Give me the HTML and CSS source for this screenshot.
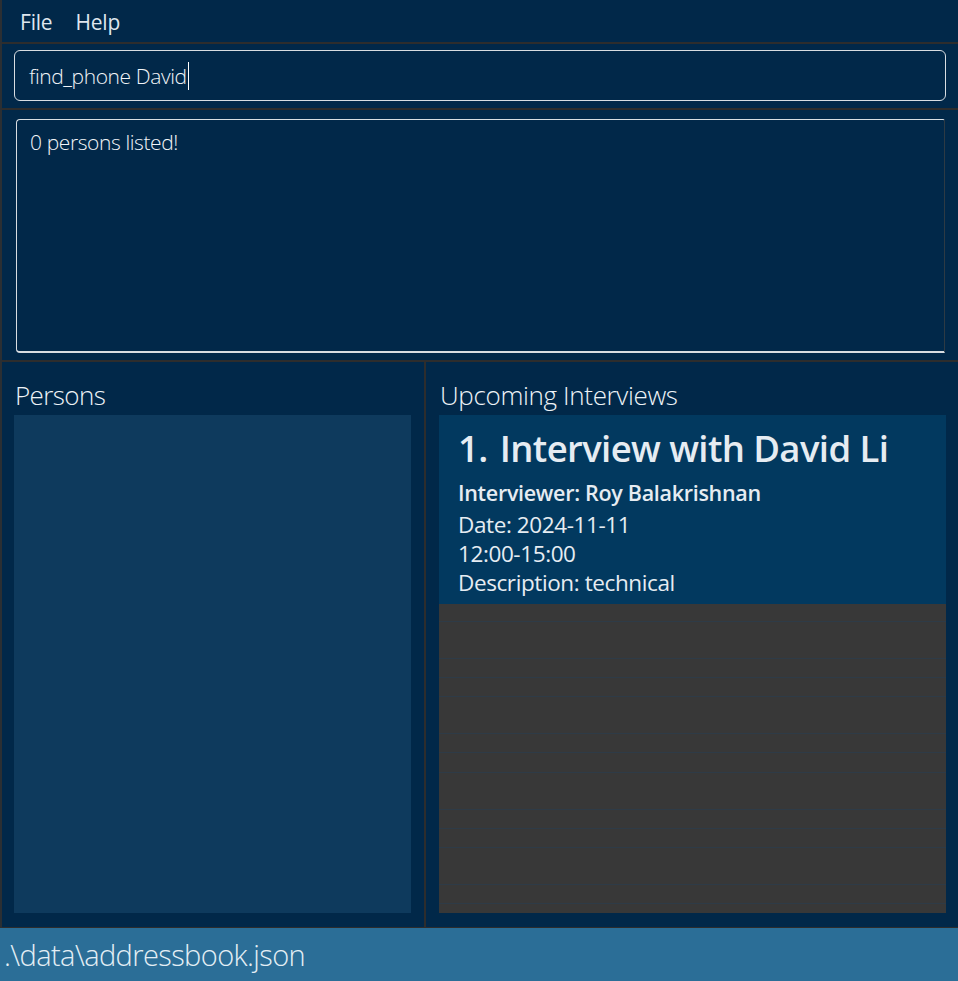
FILE: index.html
```html
<!DOCTYPE html>
<html lang="en">
<head>
<meta charset="utf-8">
<title>Address Book</title>
<link rel="stylesheet" href="styles.css">
</head>
<body>
<div class="app">
  <div class="menubar">
    <span class="menu-item">File</span>
    <span class="menu-item">Help</span>
  </div>
  <div class="command-panel">
    <div class="command-box">find_phone David<span class="caret"></span></div>
  </div>
  <div class="result-panel">
    <div class="result-box">0 persons listed!</div>
  </div>
  <div class="lists">
    <section class="pane pane-left">
      <h2 class="pane-title">Persons</h2>
      <div class="person-list"></div>
    </section>
    <section class="pane pane-right">
      <h2 class="pane-title">Upcoming Interviews</h2>
      <div class="interview-list">
        <div class="card">
          <div class="card-title"><span class="idx">1.</span>Interview with David Li</div>
          <div class="card-sub">Interviewer: Roy Balakrishnan</div>
          <div class="card-line">Date: 2024-11-11</div>
          <div class="card-line">12:00-15:00</div>
          <div class="card-line">Description: technical</div>
        </div>
        <div class="empty-rows"></div>
      </div>
    </section>
  </div>
  <div class="statusbar">.\data\addressbook.json</div>
</div>
</body>
</html>
```

FILE: styles.css
```css
* { box-sizing: border-box; }
html, body { margin: 0; padding: 0; }
body {
  background: #012849;
  color: #e8eef4;
  font-family: "Open Sans", "Noto Sans", sans-serif;
  width: 958px;
  height: 981px;
  overflow: hidden;
}
.app {
  display: flex;
  flex-direction: column;
  height: 981px;
  border-left: 2px solid #2b2f33;
}
.menubar {
  height: 44px;
  display: flex;
  align-items: center;
  gap: 23px;
  padding-left: 18px;
  padding-top: 1px;
  border-bottom: 2px solid #2d2d2d;
}
.menu-item {
  font-size: 21px;
  font-weight: 400;
  color: #dfe6ee;
  letter-spacing: -0.2px;
}
.command-panel {
  padding: 6px 12px 7px 12px;
  border-bottom: 2px solid #2d2d2d;
}
.command-box {
  height: 51px;
  border: 1.5px solid #d8dde2;
  border-radius: 6px;
  padding: 0 14px;
  display: flex;
  align-items: center;
  font-size: 21px;
  font-weight: 300;
  letter-spacing: -0.4px;
  color: #f2f5f8;
}
.caret {
  display: inline-block;
  width: 1.5px;
  height: 28px;
  background: #ffffff;
  margin-left: 1px;
}
.result-panel {
  padding: 8px 13px 7px 14px;
  border-bottom: 2px solid #2d2d2d;
}
.result-box {
  height: 234px;
  margin-top: 1px;
  border-top: 1.5px solid #d8dde2;
  border-left: 1.5px solid #d8dde2;
  border-bottom: 2px solid #d8dde2;
  border-right: 1px solid #2d3a44;
  border-radius: 4px 2px 0 4px;
  padding: 8px 13px;
  font-size: 21px;
  font-weight: 300;
  letter-spacing: -0.4px;
  color: #f2f5f8;
}
.lists {
  flex: 1;
  display: flex;
  border-bottom: 1px solid #2d2d2d;
}
.pane {
  display: flex;
  flex-direction: column;
  padding: 0 12px 14px 12px;
}
.pane-left {
  width: 424px;
  border-right: 2px solid #2d2d2d;
  padding-right: 13px;
}
.pane-right {
  flex: 1;
  padding-left: 13px;
}
.pane-title {
  margin: 0;
  height: 53px;
  padding-top: 17px;
  font-size: 26px;
  font-weight: 300;
  letter-spacing: -0.6px;
  color: #eef3f7;
  line-height: 32px;
  padding-left: 1px;
}
.pane-right .pane-title { letter-spacing: -0.35px; }
.person-list {
  flex: 1;
  background: #0e3a5d;
}
.interview-list {
  flex: 1;
  display: flex;
  flex-direction: column;
  background: #383838;
}
.card {
  background: #02395f;
  height: 189px;
  padding: 11px 19px 0 19px;
}
.card-title {
  font-size: 36.5px;
  font-weight: 600;
  letter-spacing: -0.6px;
  line-height: 44px;
  color: #e6ecf2;
}
.idx { margin-right: 12px; }
.card-sub {
  margin-top: 9px;
  font-size: 21.5px;
  font-weight: 600;
  letter-spacing: -0.3px;
  line-height: 28px;
  color: #e6ecf2;
}
.card-line {
  font-size: 22.5px;
  font-weight: 400;
  letter-spacing: -0.4px;
  line-height: 29px;
  color: #e6ecf2;
}
.card-sub + .card-line { margin-top: 3px; }
.empty-rows {
  flex: 1;
  background-color: #383838;
  background-image:
    repeating-linear-gradient(to bottom,
      transparent 0px, transparent 17px,
      #2e3b47 17px, #2e3b47 18px,
      transparent 18px, transparent 54px,
      #2e3b47 54px, #2e3b47 55px,
      transparent 55px, transparent 73px,
      #2e3b47 73px, #2e3b47 74px,
      transparent 74px, transparent 75.33px);
}
.statusbar {
  height: 53px;
  background: #2b6e97;
  margin-left: -2px;
  padding-left: 4px;
  display: flex;
  align-items: center;
  font-size: 29px;
  font-weight: 300;
  letter-spacing: -0.6px;
  color: #e4eef5;
}
```
